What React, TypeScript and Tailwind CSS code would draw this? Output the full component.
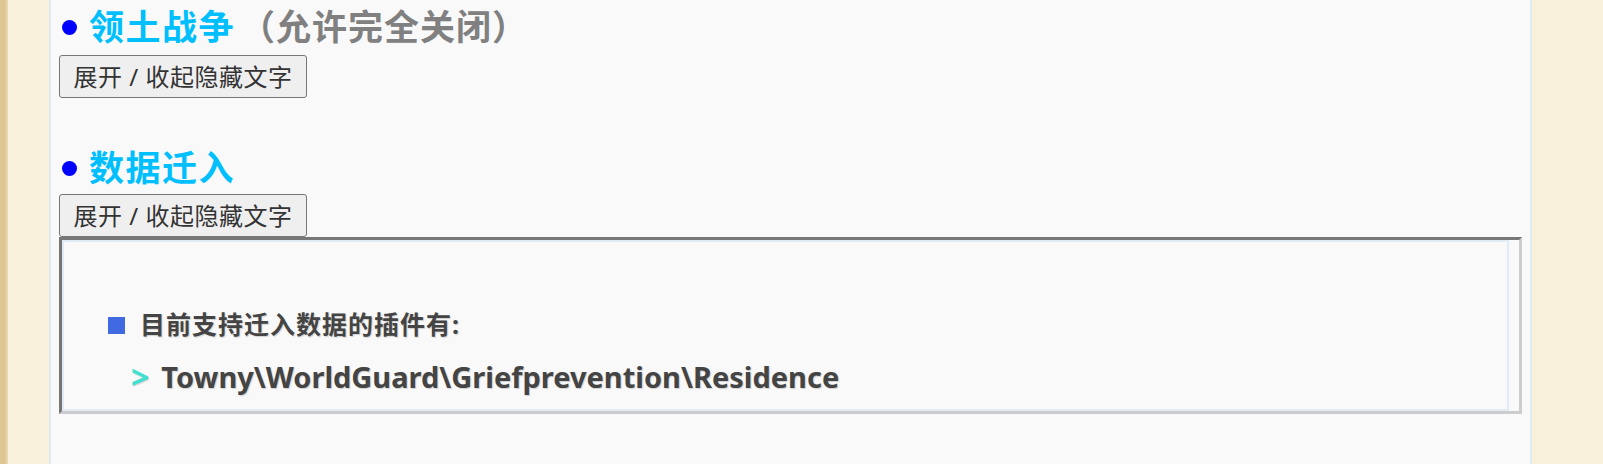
import React from "react";

const cjk = { fontFamily: '"Noto Sans", "Noto Sans CJK SC", sans-serif' };

function Heading({ title, note }: { title: string; note?: string }) {
  return (
    <div className="flex items-center h-[46px] font-bold text-[35px] tracking-[1.5px] leading-[46px]" style={cjk}>
      <span className="inline-block w-[15px] h-[15px] rounded-full bg-[#0000ff] ml-[3px] mr-[12px] shrink-0" />
      <span className="text-[#00bfff]">{title}</span>
      {note ? <span className="text-[#808080] ml-[5px] tracking-[1px]">{note}</span> : null}
    </div>
  );
}

function ToggleButton() {
  return (
    <button
      className="self-start h-[43px] w-[248px] border border-[#767676] rounded-[3px] bg-[#efefef] text-[#333] text-[24px] tracking-[0.5px] leading-[30px] flex items-center justify-center"
      style={cjk}
    >
      展开 / 收起隐藏文字
    </button>
  );
}

export default function App() {
  return (
    <div className="flex h-[464px] w-[1603px] bg-[#f9f0dc] overflow-hidden">
      <div className="w-[6px] bg-[#e0c594] shrink-0" />
      <div className="w-[2px] bg-[#e9d6b0] shrink-0" />
      <div className="w-[41px] shrink-0" />
      <main className="w-[1483px] shrink-0 bg-[#f9f9f9] border-l-2 border-r-2 border-[#e1ebf5] pl-[8px] pr-[8px] flex flex-col">
        <div className="mt-[4px]" />
        <Heading title="领土战争" note="（允许完全关闭）" />
        <div className="h-[5px]" />
        <ToggleButton />
        <div className="h-[47px]" />
        <Heading title="数据迁入" />
        <div className="h-[3px]" />
        <ToggleButton />
        <div className="h-[177px] border-[3px] border-t-[#777] border-l-[#777] border-b-[#ccc] border-r-[#ccc] flex">
          <div className="flex-1 mr-[10px] border-2 border-[#e0ebf5] pt-[63px] pl-[44px]" style={cjk}>
            <div className="flex items-center h-[40px] font-bold text-[#444] text-[25px] tracking-[1px] [text-shadow:1px_1px_1px_#d0d0d0]">
              <span className="inline-block w-[17px] h-[17px] bg-[#4169e1] mr-[15px] shrink-0" />
              <span>目前支持迁入数据的插件有:</span>
            </div>
            <div className="flex items-center h-[40px] mt-[12px] font-bold text-[#444] text-[29px] [text-shadow:1px_1px_1px_#d0d0d0] pl-[23px]">
              <span className="text-[#40e0d0] text-[32px] mr-[12px]">&gt;</span>
              <span>Towny\WorldGuard\Griefprevention\Residence</span>
            </div>
          </div>
        </div>
      </main>
    </div>
  );
}
